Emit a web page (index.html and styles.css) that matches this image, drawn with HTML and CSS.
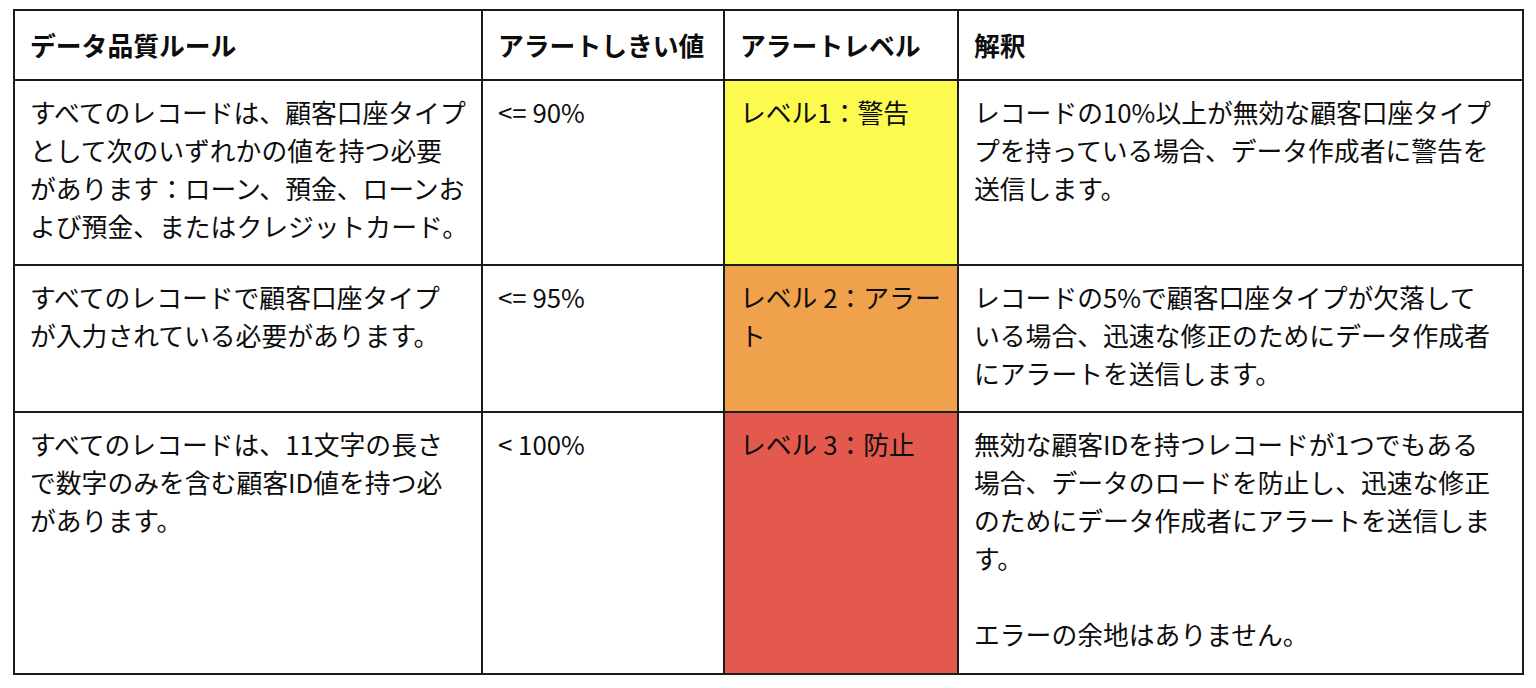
FILE: index.html
```html
<!DOCTYPE html>
<html lang="ja">
<head>
<meta charset="utf-8">
<link rel="stylesheet" href="styles.css">
</head>
<body>
<div class="page">
<table class="rules">
  <colgroup>
    <col class="c-rule">
    <col class="c-th">
    <col class="c-level">
    <col class="c-desc">
  </colgroup>
  <thead>
    <tr>
      <th>データ品質ルール</th>
      <th>アラートしきい値</th>
      <th>アラートレベル</th>
      <th>解釈</th>
    </tr>
  </thead>
  <tbody>
    <tr>
      <td>すべてのレコードは、顧客口座タイプ<br>として次のいずれかの値を持つ必要<br>があります：ローン、預金、ローンお<br>よび預金、またはクレジットカード。</td>
      <td>&lt;= 90%</td>
      <td class="lv lv1">レベル1：警告</td>
      <td>レコードの10%以上が無効な顧客口座タイプ<br>プを持っている場合、データ作成者に警告を<br>送信します。</td>
    </tr>
    <tr>
      <td>すべてのレコードで顧客口座タイプ<br>が入力されている必要があります。</td>
      <td>&lt;= 95%</td>
      <td class="lv lv2">レベル 2：アラー<br>ト</td>
      <td>レコードの5%で顧客口座タイプが欠落して<br>いる場合、迅速な修正のためにデータ作成者<br>にアラートを送信します。</td>
    </tr>
    <tr>
      <td>すべてのレコードは、11文字の長さ<br>で数字のみを含む顧客ID値を持つ必<br>があります。</td>
      <td>&lt; 100%</td>
      <td class="lv lv3">レベル 3：防止</td>
      <td>無効な顧客IDを持つレコードが1つでもある<br>場合、データのロードを防止し、迅速な修正<br>のためにデータ作成者にアラートを送信しま<br>す。<br><br>エラーの余地はありません。</td>
    </tr>
  </tbody>
</table>
</div>
</body>
</html>
```

FILE: styles.css
```css
html, body {
  margin: 0;
  padding: 0;
  background: #ffffff;
}

.page {
  padding: 9px 0 0 13px;
}

.rules {
  border-collapse: collapse;
  table-layout: fixed;
  width: 1509px;
  font-family: "Noto Sans CJK JP", "Noto Sans", sans-serif;
  font-size: 25.8px;
  line-height: 38px;
  color: #0d0d0d;
  border: 2px solid #1c1c1c;
}

.c-rule { width: 468px; }
.c-th { width: 242px; }
.c-level { width: 234px; }
.c-desc { width: 565px; }

.rules th,
.rules td {
  border: 2px solid #1c1c1c;
  text-align: left;
  vertical-align: top;
  white-space: nowrap;
  overflow: hidden;
}

.rules th {
  font-weight: 700;
  padding: 15px 15px 15px 15px;
  height: 38px;
}

.rules td {
  font-weight: 400;
  padding: 12px 8px 19px 15px;
}

.rules tbody tr:last-child td {
  padding-bottom: 20px;
}

.lv1 { background: #fcf94f; }
.lv2 { background: #efa14b; }
.lv3 { background: #e3594e; }
```
